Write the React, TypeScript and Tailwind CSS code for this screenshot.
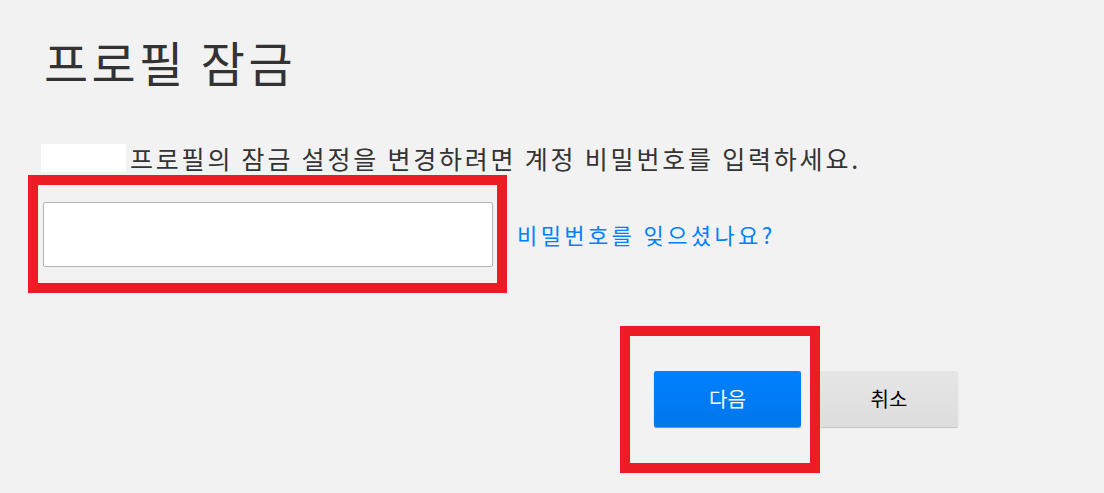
import React from "react";

export default function App() {
  return (
    <div
      className="relative w-[1104px] h-[493px] bg-[#f2f2f2] overflow-hidden"
      style={{ fontFamily: '"Noto Sans CJK KR", "Noto Sans", sans-serif' }}
    >
      <div className="pl-[44px] pt-[29px]">
        <h1 className="text-[48px] leading-[64px] text-[#333333] font-normal tracking-[3.4px]">프로필 잠금</h1>
        <div className="mt-[50px] flex items-center text-[25px] leading-[30px] text-[#333333] tracking-[2.8px]">
          <span className="inline-block w-[85px] h-[28px] bg-white -ml-[3px] mr-[4px]"></span>
          <span>프로필의 잠금 설정을 변경하려면 계정 비밀번호를 입력하세요.</span>
        </div>
        <div className="mt-[29px] flex items-center">
          <input
            type="password"
            className="w-[450px] h-[65px] bg-white border border-[#b3b3b3] rounded-[2px] -ml-[1px] outline-none"
          />
          <a className="ml-[24px] text-[22px] text-[#0080ff] tracking-[3.4px] cursor-pointer">비밀번호를 잊으셨나요?</a>
        </div>
        <div className="mt-[104px] flex ml-[610px] gap-[19px]">
          <button className="w-[147px] h-[56px] rounded-[2px] bg-gradient-to-b from-[#0080ff] to-[#0077ea] text-white text-[20px] shadow-[0_1px_1px_rgba(0,0,0,0.45)]">
            다음
          </button>
          <button className="w-[138px] h-[56px] rounded-[2px] bg-gradient-to-b from-[#e6e6e6] to-[#dddddd] text-black text-[20px] shadow-[0_1px_1px_rgba(0,0,0,0.2)]">
            취소
          </button>
        </div>
      </div>
      <div className="absolute left-[28px] top-[175px] w-[479px] h-[118px] border-[10px] border-[#ed1c24] pointer-events-none"></div>
      <div className="absolute left-[620px] top-[326px] w-[200px] h-[147px] border-[10px] border-[#ed1c24] pointer-events-none"></div>
    </div>
  );
}
